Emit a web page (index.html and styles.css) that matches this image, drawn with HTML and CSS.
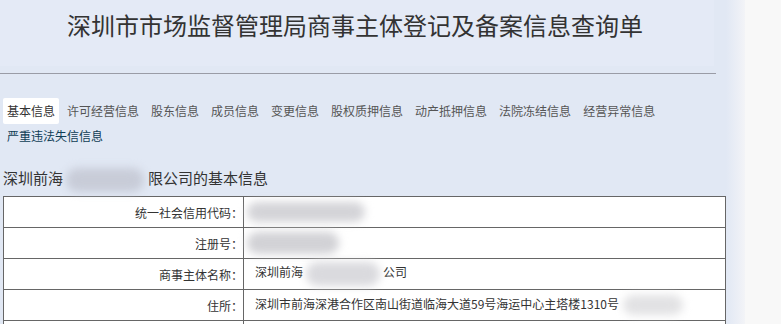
FILE: index.html
```html
<!DOCTYPE HTML>
<html lang="zh-CN">
<head>
	<meta charset="UTF-8">
	<title>商事主体登记及备案信息查询单</title>
	<link rel="stylesheet" href="styles.css">
</head>
<body>
<div class="page">
	<div class="main">
		<div class="head">
			<h1>深圳市市场监督管理局商事主体登记及备案信息查询单</h1>
		</div>
		<div class="rule"></div>
		<!--标签页-->
		<ul class="tabs">
			<li class="on">基本信息</li>
			<li>许可经营信息</li>
			<li>股东信息</li>
			<li>成员信息</li>
			<li>变更信息</li>
			<li>股权质押信息</li>
			<li>动产抵押信息</li>
			<li>法院冻结信息</li>
			<li>经营异常信息</li>
			<li class="dark">严重违法失信信息</li>
		</ul>
		<h2 class="sub">深圳前海<span class="mask m-head"></span>限公司的基本信息</h2>
		<table class="info">
			<tr>
				<th>统一社会信用代码：</th>
				<td><span class="mask m-code"></span></td>
			</tr>
			<tr>
				<th>注册号：</th>
				<td><span class="mask m-reg"></span></td>
			</tr>
			<tr>
				<th>商事主体名称：</th>
				<td>深圳前海<span class="mask m-name"></span>公司</td>
			</tr>
			<tr>
				<th>住所：</th>
				<td>深圳市前海深港合作区南山街道临海大道59号海运中心主塔楼1310号<span class="mask m-addr"></span></td>
			</tr>
			<tr>
				<th>&nbsp;</th>
				<td>&nbsp;</td>
			</tr>
		</table>
	</div>
	<div class="side"></div>
</div>
</body>
</html>
```

FILE: styles.css
```css
*{
	padding:0;
	margin:0;
}
ul,li{
	list-style:none;
}
body{
	font-family:"Noto Sans CJK SC","Liberation Sans",sans-serif;
	background:#f7f7f7;
	overflow:hidden;
	height:324px;
}
.page{
	display:flex;
	height:324px;
}
	/**左边主体，浅蓝色背景**/
	.main{
		width:745px;
		flex:none;
		background:linear-gradient(to right,#e1e8f4 0,#e1e8f4 726px,#eceff6 738px,#f3f4f7 745px);
	}
	.side{
		flex:1;
		background:#f8f8f8;
	}
	.head{
		width:714px;
		height:66px;
		background:#e4eaf6;
		display:flex;
		align-items:center;
		justify-content:center;
	}
	.head h1{
		font-size:24px;
		font-weight:normal;
		color:#333;
		margin-top:-18px;
		padding-right:4px;
	}
	.rule{
		width:716px;
		height:1px;
		background:#9a9ca6;
		margin-top:7px;
	}
	/**标签**/
	.tabs{
		display:flex;
		flex-wrap:wrap;
		width:680px;
		padding:24px 0 0 3px;
		font-size:12px;
		color:#555;
	}
	.tabs li{
		height:26px;
		line-height:26px;
		padding:0 4px;
		margin-right:4px;
	}
	.tabs li.on{
		background:#fff;
		color:#333;
		border-radius:2px;
	}
	.tabs li.dark{
		color:#0f3d55;
		height:24px;
		line-height:24px;
	}
	.sub{
		font-size:15px;
		font-weight:normal;
		color:#333;
		padding:17px 0 0 3px;
		height:26px;
		line-height:26px;
		margin-bottom:5px;
	}
	/**表格**/
	.info{
		margin-left:3px;
		width:723px;
		border-collapse:collapse;
		background:#fff;
		font-size:12px;
		color:#333;
	}
	.info th,.info td{
		border:1px solid #666;
		height:30px;
		padding:0;
		white-space:nowrap;
	}
	.info th{
		width:239px;
		text-align:right;
		font-weight:normal;
		padding-right:0;
	}
	.info td{
		padding-left:11px;
	}
	/**打码的模糊块**/
	.mask{
		display:inline-block;
		vertical-align:middle;
		background:#c9ccd4;
		border-radius:12px;
		filter:blur(4px);
	}
	.m-head{
		width:78px;
		height:24px;
		margin:0 4px 0 3px;
		background:#c8ccd8;
	}
	.m-code{
		width:118px;
		height:20px;
		background:#d4d4d8;
		margin-left:-8px;
	}
	.m-reg{
		width:92px;
		height:22px;
		background:#d2d2d6;
		margin-left:-8px;
	}
	.m-name{
		width:74px;
		height:24px;
		background:#dadade;
		margin:0 3px;
	}
	.m-addr{
		width:60px;
		height:20px;
		background:#e2e2e4;
		margin-left:4px;
	}
```
